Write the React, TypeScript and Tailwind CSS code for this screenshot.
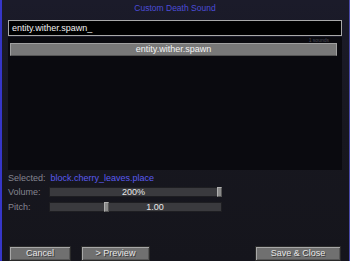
export default function App() {
  const font = { fontFamily: '"Liberation Sans", Arial, sans-serif' };
  return (
    <div
      className="w-[350px] h-[261px] overflow-hidden flex flex-col border-l-2 border-r border-l-[#3636c8] border-r-[#4a4aa8] bg-gradient-to-b from-[#1b1b2a] via-[#17171f] to-[#15151c] text-[9px] leading-none pl-[6px] pr-[7px]"
      style={font}
    >
      <div className="h-[12px] flex items-end justify-center text-[#4c4cd8] text-[8.5px]">Custom Death Sound</div>
      <div className="mt-[8px] h-[16px] border border-[#a8a8a8] bg-black flex items-center pl-[3px] text-[#f0f0f0]">
        entity.wither.spawn_
      </div>
      <div className="h-[133px] bg-[#0a0a0f] mt-[1px] flex flex-col pl-[2px] pr-[5px]">
        <div className="h-[6px] flex items-center justify-end pr-[8px]">
          <span className="text-[#4a4a56] text-[5px] leading-none">1 sounds</span>
        </div>
        <div className="h-[13px] bg-[#787878] border border-[#a0a0a0] border-b-[#555] flex items-center justify-center text-[#f2f2f2]">
          entity.wither.spawn
        </div>
      </div>
      <div className="mt-[3px] h-[10px] flex items-center gap-[5px]">
        <span className="text-[#858590]">Selected:</span>
        <span className="text-[#5a5af0]">block.cherry_leaves.place</span>
      </div>
      <div className="mt-[4px] h-[10px] flex items-center">
        <span className="w-[41px] text-[#858590]">Volume:</span>
        <div className="w-[173px] h-[10px] bg-[#3a3a3e] border border-[#1e1e22] flex items-center">
          <div className="flex-1 text-center text-[#e8e8e8]">200%</div>
          <div className="w-[5px] h-[10px] bg-[#8a8a8a] border border-[#b0b0b0] border-r-[#555] border-b-[#555] -mr-[1px]" />
        </div>
      </div>
      <div className="mt-[5px] h-[10px] flex items-center">
        <span className="w-[41px] text-[#858590]">Pitch:</span>
        <div className="w-[173px] h-[10px] bg-[#3a3a3e] border border-[#1e1e22] flex items-center">
          <div className="w-[54px]" />
          <div className="w-[5px] h-[10px] bg-[#8a8a8a] border border-[#b0b0b0] border-r-[#555] border-b-[#555]" />
          <div className="flex-1 text-center text-[#e8e8e8] pr-[20px]">1.00</div>
        </div>
      </div>
      <div className="mt-[34px] h-[15px] flex items-start">
        <button className="ml-[1px] w-[62px] h-[15px] bg-[#707070] border border-[#2a2a2a] shadow-[inset_1px_1px_0_#a8a8a8,inset_-1px_-1px_0_#555] text-[#e6e6e6] text-[9px] [text-shadow:1px_1px_0_#3a3a3a]">
          Cancel
        </button>
        <button className="ml-[10px] w-[69px] h-[15px] bg-[#707070] border border-[#2a2a2a] shadow-[inset_1px_1px_0_#a8a8a8,inset_-1px_-1px_0_#555] text-[#e6e6e6] text-[9px] [text-shadow:1px_1px_0_#3a3a3a]">
          &gt; Preview
        </button>
        <div className="flex-1" />
        <button className="mr-[1px] w-[86px] h-[15px] bg-[#707070] border border-[#2a2a2a] shadow-[inset_1px_1px_0_#a8a8a8,inset_-1px_-1px_0_#555] text-[#e6e6e6] text-[9px] [text-shadow:1px_1px_0_#3a3a3a]">
          Save &amp; Close
        </button>
      </div>
    </div>
  );
}
